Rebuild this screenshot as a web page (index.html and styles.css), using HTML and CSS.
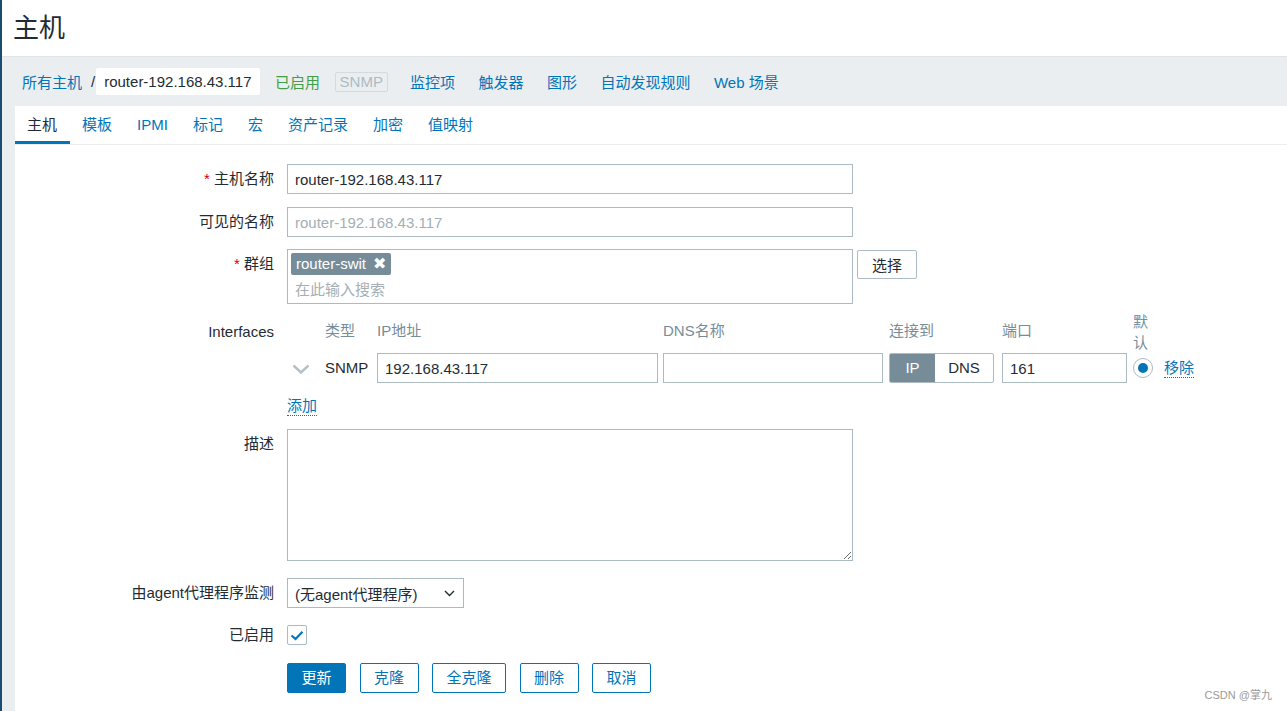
FILE: index.html
```html
<!DOCTYPE html>
<html lang="zh">
<head>
<meta charset="utf-8">
<title>主机</title>
<link rel="stylesheet" href="styles.css">
</head>
<body>
<div class="page">
  <header class="header"><h1 class="title">主机</h1></header>
  <nav class="hostnav">
    <a class="link">所有主机</a><span class="sep">/</span><span class="crumb">router-192.168.43.117</span>
    <span class="status-on">已启用</span>
    <span class="snmp">SNMP</span>
    <a class="link nav-item">监控项</a>
    <a class="link nav-item">触发器</a>
    <a class="link nav-item">图形</a>
    <a class="link nav-item">自动发现规则</a>
    <a class="link nav-item">Web 场景</a>
  </nav>
  <main class="card">
    <div class="tabs">
      <span class="tab active">主机</span>
      <span class="tab">模板</span>
      <span class="tab">IPMI</span>
      <span class="tab">标记</span>
      <span class="tab">宏</span>
      <span class="tab">资产记录</span>
      <span class="tab">加密</span>
      <span class="tab">值映射</span>
    </div>
    <form class="form">
      <div class="row">
        <label class="label"><span class="req">*</span> 主机名称</label>
        <input class="input wide" type="text" value="router-192.168.43.117">
      </div>
      <div class="row row-g12">
        <label class="label">可见的名称</label>
        <input class="input wide" type="text" placeholder="router-192.168.43.117">
      </div>
      <div class="row row-g7">
        <label class="label"><span class="req">*</span> 群组</label>
        <div class="multiselect">
          <span class="tag">router-swit<span class="tag-x">✖</span></span>
          <span class="ms-placeholder">在此输入搜索</span>
        </div>
        <button type="button" class="btn-grey">选择</button>
      </div>
      <div class="row">
        <label class="label label-iface">Interfaces</label>
        <div class="iface">
          <div class="iface-grid iface-head">
            <span></span>
            <span class="hcell">类型</span>
            <span class="hcell">IP地址</span>
            <span class="hcell">DNS名称</span>
            <span class="hcell">连接到</span>
            <span class="hcell">端口</span>
            <span class="head-default">默认</span>
            <span></span>
          </div>
          <div class="iface-grid iface-row">
            <span class="chev"><svg width="18" height="10" viewBox="0 0 18 10"><polyline points="1.5,1.5 9,8.5 16.5,1.5" fill="none" stroke="#b4c0c6" stroke-width="2.4"/></svg></span>
            <span class="iface-type">SNMP</span>
            <span><input class="input ip" type="text" value="192.168.43.117"></span>
            <span><input class="input dns" type="text" value=""></span>
            <span class="toggle"><span class="tg tg-on">IP</span><span class="tg">DNS</span></span>
            <span><input class="input port" type="text" value="161"></span>
            <span class="radio"><span class="radio-dot"></span></span>
            <span><a class="link dotted">移除</a></span>
          </div>
          <a class="link dotted add">添加</a>
        </div>
      </div>
      <div class="row row-g17">
        <label class="label">描述</label>
        <textarea class="textarea"></textarea>
      </div>
      <div class="row row-g17">
        <label class="label">由agent代理程序监测</label>
        <div class="select">
          <span>(无agent代理程序)</span>
          <svg width="11" height="7" viewBox="0 0 11 7"><polyline points="1,1 5.5,5.5 10,1" fill="none" stroke="#1f2c33" stroke-width="1.4"/></svg>
        </div>
      </div>
      <div class="row row-g18">
        <label class="label label-check">已启用</label>
        <span class="checkbox"><svg width="14" height="11" viewBox="0 0 14 11"><polyline points="1.5,5.5 5.5,9 12.5,1.8" fill="none" stroke="#0275b8" stroke-width="2.2"/></svg></span>
      </div>
      <div class="row">
        <span class="label"></span>
        <div class="buttons">
          <button type="button" class="btn btn-primary">更新</button>
          <button type="button" class="btn">克隆</button>
          <button type="button" class="btn">全克隆</button>
          <button type="button" class="btn">删除</button>
          <button type="button" class="btn">取消</button>
        </div>
      </div>
    </form>
  </main>
  <div class="watermark">CSDN @掌九</div>
</div>
</body>
</html>
```

FILE: styles.css
```css
* { box-sizing: border-box; }
html, body { margin: 0; padding: 0; }
body {
  font-family: "Liberation Sans", Arial, "Noto Sans CJK SC", sans-serif;
  font-size: 15px;
  color: #1f2c33;
  background: #ebeef0;
  overflow: hidden;
}
.page {
  position: relative;
  min-height: 711px;
  height: 711px;
  border-left: 2px solid #184d70;
  display: flex;
  flex-direction: column;
}
.header {
  background: #fff;
  height: 57px;
  border-bottom: 1px solid #dfe4e7;
  flex: none;
}
.title {
  margin: 0;
  font-size: 26px;
  font-weight: normal;
  line-height: 56px;
  padding-left: 11px;
  color: #1f2c33;
}
.hostnav {
  height: 49px;
  flex: none;
  display: flex;
  align-items: center;
  padding-left: 20px;
  white-space: nowrap;
}
.link { color: #0275b8; text-decoration: none; cursor: pointer; }
.sep { color: #1f2c33; margin: 0 1px 0 9px; }
.crumb {
  background: #fff;
  height: 27px;
  line-height: 27px;
  padding: 0 8px;
  border-radius: 2px;
}
.status-on { color: #429e47; margin-left: 15.5px; }
.snmp {
  margin-left: 14.5px;
  color: #acbbc2;
  border: 1px solid #d3dbdf;
  border-radius: 2px;
  height: 20px;
  line-height: 18px;
  padding: 0 4px;
}
.nav-item { margin-left: 23.5px; }
.snmp + .nav-item { margin-left: 22px; }

.card {
  flex: 1;
  margin-left: 13px;
  background: #fff;
}
.tabs {
  display: flex;
  height: 39px;
  border-bottom: 1px solid #ebeef0;
}
.tab {
  padding: 3px 12.5px 0;
  line-height: 32px;
  height: 38px;
  border-bottom: 3px solid transparent;
  color: #0275b8;
}
.tab.active { color: #1f2c33; border-bottom-color: #0275b8; padding-left: 12px; }

.form { padding-top: 19px; }
.row { display: flex; align-items: flex-start; margin-bottom: 13px; }
.row-g12 { margin-bottom: 12px; }
.row-g7 { margin-bottom: 7px; }
.row-g18 { margin-bottom: 18px; }
.row-g17 { margin-bottom: 17px; }
.label {
  flex: none;
  width: 272px;
  padding-right: 13px;
  text-align: right;
  line-height: 30px;
  white-space: nowrap;
}
.label-iface { line-height: 20px; padding-top: 11px; }
.label-check { line-height: 20px; }
.req { color: #d40000; }

.input {
  height: 30px;
  border: 1px solid #acbbc2;
  padding: 0 7px;
  font: inherit;
  color: #1f2c33;
  background: #fff;
  border-radius: 0;
  outline: none;
}
.input::placeholder { color: #a3afb5; }
.wide { width: 566px; }
.ip { width: 281px; }
.dns { width: 220px; }
.port { width: 125px; }

.multiselect {
  width: 566px;
  height: 55px;
  border: 1px solid #acbbc2;
  padding: 3px;
  display: flex;
  flex-direction: column;
  align-items: flex-start;
}
.tag {
  background: #768d99;
  color: #fff;
  border-radius: 2px;
  height: 22px;
  line-height: 22px;
  padding: 0 5px 0 5px;
  white-space: nowrap;
  display: flex;
  align-items: center;
}
.tag-x { margin-left: 7px; font-size: 16px; line-height: 22px; }
.ms-placeholder { color: #a3afb5; padding-left: 4px; line-height: 20px; margin-top: 5px; }
.btn-grey {
  margin-left: 4px;
  margin-top: 1px;
  height: 29px;
  padding: 0 14px;
  border: 1px solid #acbbc2;
  border-radius: 2px;
  background: #fff;
  font: inherit;
  color: #1f2c33;
}

.iface { display: flex; flex-direction: column; align-items: flex-start; }
.iface-grid {
  display: grid;
  grid-template-columns: 38px 52px 286px 226px 113px 131px 31px auto;
  align-items: center;
}
.iface-head { height: 42px; color: #768d99; }
.hcell { align-self: start; margin-top: 10px; line-height: 20px; }
.head-default { width: 20px; line-height: 21px; }
.iface-row { height: 30px; }
.chev { display: flex; padding-left: 5px; padding-top: 2px; }
.iface-type { line-height: 30px; }
.toggle {
  display: flex;
  width: 105px;
  height: 30px;
  border: 1px solid #acbbc2;
  border-radius: 2px;
  overflow: hidden;
}
.tg { flex: 1; text-align: center; line-height: 28px; color: #1f2c33; }
.tg-on { flex: none; width: 45px; background: #768d99; color: #fff; }
.radio {
  width: 20px;
  height: 20px;
  border: 1px solid #acbbc2;
  border-radius: 50%;
  display: flex;
  align-items: center;
  justify-content: center;
}
.radio-dot { width: 10px; height: 10px; border-radius: 50%; background: #0275b8; }
.dotted { border-bottom: 1px dotted #0275b8; line-height: 19px; display: inline-block; }
.add { margin-top: 13px; }

.textarea {
  width: 566px;
  height: 132px;
  border: 1px solid #acbbc2;
  border-radius: 0;
  font: inherit;
  outline: none;
  resize: both;
}
.select {
  width: 177px;
  height: 30px;
  border: 1px solid #acbbc2;
  padding: 0 8px 0 7px;
  display: flex;
  align-items: center;
  justify-content: space-between;
  white-space: nowrap;
}
.checkbox {
  width: 20px;
  height: 20px;
  border: 1px solid #acbbc2;
  border-radius: 2px;
  display: flex;
  align-items: center;
  justify-content: center;
}
.buttons { display: flex; gap: 13.5px; }
.btn {
  height: 30px;
  padding: 0 13.5px;
  border: 1px solid #0275b8;
  border-radius: 2px;
  background: #fff;
  color: #0275b8;
  font: inherit;
  line-height: 28px;
}
.btn-primary { background: #0275b8; color: #fff; }

.watermark {
  position: absolute;
  right: 15px;
  bottom: 9px;
  font-size: 11px;
  color: #9a9a9a;
}
```
